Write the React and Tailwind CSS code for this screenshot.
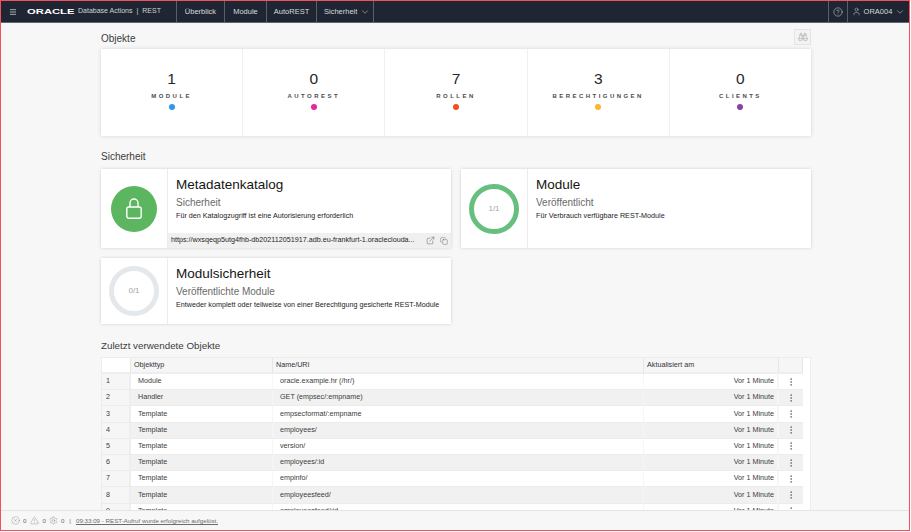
import {
  Binoculars,
  ChevronDown,
  CircleHelp,
  CircleX,
  Copy,
  EllipsisVertical,
  ExternalLink,
  Menu,
  Settings,
  TriangleAlert,
  User,
} from "lucide-react";

const counts = [
  { value: 1, label: "MODULE", dot: "bg-[#2f96ef]" },
  { value: 0, label: "AUTOREST", dot: "bg-[#e9259b]" },
  { value: 7, label: "ROLLEN", dot: "bg-[#f4511e]" },
  { value: 3, label: "BERECHTIGUNGEN", dot: "bg-[#fbb62b]" },
  { value: 0, label: "CLIENTS", dot: "bg-[#8344a8]" },
];

const rows = [
  ["Module", "oracle.example.hr (/hr/)"],
  ["Handler", "GET (empsec/:empname)"],
  ["Template", "empsecformat/:empname"],
  ["Template", "employees/"],
  ["Template", "version/"],
  ["Template", "employees/:id"],
  ["Template", "empinfo/"],
  ["Template", "employeesfeed/"],
  ["Template", "employeesfeed/:id"],
];

function NavItem({ children, className = "" }) {
  return (
    <div className={`h-full flex items-center border-l border-[#59606b] text-[7.5px] text-[#d8dadd] ${className}`}>
      {children}
    </div>
  );
}

function Ring({ label, color }) {
  return (
    <div className={`w-[50px] h-[50px] rounded-full border-[5px] ${color} flex items-center justify-center text-[8px] text-[#a3a6aa]`}>
      {label}
    </div>
  );
}

function Card({ icon, title, sub, text, className = "", footer }) {
  return (
    <div className={`w-[350px] bg-white shadow-[0_0_3px_rgba(0,0,0,0.16)] flex ${className}`}>
      <div className="w-[67px] shrink-0 border-r border-[#ececec] flex items-center justify-center">{icon}</div>
      <div className="flex-1 min-w-0 flex flex-col">
        <div className="flex-1 pl-2 pt-[7px]">
          <div className="text-[13.5px] leading-[18px] text-[#161513]">{title}</div>
          <div className="text-[10px] leading-[12px] mt-[3px] text-[#6a6a6a]">{sub}</div>
          <div className="text-[7.2px] leading-[10px] mt-[2px] text-[#1c1c1c]">{text}</div>
        </div>
        {footer}
      </div>
    </div>
  );
}

export default function App() {
  return (
    <div className="w-[911px] h-[532px] bg-white antialiased font-['Liberation_Sans',Arial,sans-serif]">
      <div className="w-[910px] h-[531px] border border-[#f0545a] flex flex-col overflow-hidden bg-[#f7f7f7]">
        <header className="h-[22px] shrink-0 bg-[#1f2532] flex items-center border-b border-[#5f6670]">
          <Menu size={8} strokeWidth={2.5} className="ml-2 text-[#c3c6ca]" />
          <span className="ml-[10px] w-[49px] text-[7.5px] font-bold text-white scale-x-[1.5] origin-left">ORACLE</span>
          <span className="ml-[2px] w-[98px] text-[7px] text-[#d0d3d6] whitespace-nowrap">
            Database Actions
            <span className="ml-[4px]">|</span>
            <span className="ml-[4px]">REST</span>
          </span>
          <NavItem className="w-[48px] justify-center">Überblick</NavItem>
          <NavItem className="w-[42px] justify-center">Module</NavItem>
          <NavItem className="w-[50px] justify-center">AutoREST</NavItem>
          <NavItem className="w-[58px] pl-[7px] gap-[3px] border-r">
            Sicherheit <ChevronDown size={10} strokeWidth={1.25} />
          </NavItem>
          <div className="flex-1" />
          <NavItem className="w-[19px] justify-center">
            <CircleHelp size={10} strokeWidth={1.25} />
          </NavItem>
          <NavItem className="w-[62px] justify-center gap-[3px]">
            <User size={9} strokeWidth={1.25} />
            ORA004
            <ChevronDown size={10} strokeWidth={1.25} />
          </NavItem>
        </header>

        <main className="flex-1 min-h-0 overflow-hidden pl-[100px] pr-[98px]">
          <div className="h-[26px] flex items-center justify-between">
            <h2 className="text-[10px] text-[#3d3c3a] mt-[4px]">Objekte</h2>
            <div className="w-[17px] h-[16px] mt-[1px] border border-[#e4e4e4] bg-[#f3f3f3] flex items-center justify-center text-[#8a8a8a]">
              <Binoculars size={10} strokeWidth={1} />
            </div>
          </div>

          <div className="h-[87px] bg-white shadow-[0_0_4px_rgba(0,0,0,0.14)] flex">
            {counts.map((c) => (
              <div key={c.label} className="flex-1 border-r border-[#f0f0f0] last:border-r-0 flex flex-col items-center pt-[21px]">
                <div className="text-[15.5px] leading-[18px] text-[#262626]">{c.value}</div>
                <div className="text-[6px] leading-[8px] mt-[4px] font-bold tracking-[2.45px] text-[#4c4c4c]">{c.label}</div>
                <div className={`w-[6px] h-[6px] rounded-full mt-[4px] ${c.dot}`} />
              </div>
            ))}
          </div>

          <h2 className="text-[10px] leading-[12px] mt-[15px] text-[#3d3c3a]">Sicherheit</h2>

          <div className="flex flex-wrap gap-x-[10px] gap-y-[10px] mt-[6px]">
            <Card
              className="h-[79px]"
              icon={
                <div className="w-[46px] h-[46px] rounded-full bg-[#5cb660] flex items-center justify-center">
                  <svg width="16" height="21" viewBox="0 0 16 21" fill="none" stroke="white" strokeWidth="1.4">
                    <rect x="0.8" y="9" width="14.4" height="11.3" rx="2" />
                    <path d="M4 9V5a4 4 0 0 1 8 0v4" />
                  </svg>
                </div>
              }
              title="Metadatenkatalog"
              sub="Sicherheit"
              text="Für den Katalogzugriff ist eine Autorisierung erforderlich"
              footer={
                <div className="h-[15px] bg-[#f0f0f0] flex items-center pl-[3px] pr-[3px] text-[#333]">
                  <span className="flex-1 min-w-0 whitespace-nowrap text-[7.2px] text-[#1f1f1f]">
                    https://wxsqeqp5utg4fhb-db202112051917.adb.eu-frankfurt-1.oracleclouda...
                  </span>
                  <ExternalLink size={9} strokeWidth={1} />
                  <Copy size={8} strokeWidth={1} className="ml-[5px]" />
                </div>
              }
            />
            <Card
              className="h-[79px]"
              icon={<Ring label="1/1" color="border-[#66bf7f]" />}
              title="Module"
              sub="Veröffentlicht"
              text="Für Verbrauch verfügbare REST-Module"
            />
            <Card
              className="h-[66px]"
              icon={<Ring label="0/1" color="border-[#e4e8eb]" />}
              title="Modulsicherheit"
              sub="Veröffentlichte Module"
              text="Entweder komplett oder teilweise von einer Berechtigung gesicherte REST-Module"
            />
          </div>

          <h2 className="text-[9.8px] leading-[12px] mt-[16px] text-[#3d3c3a]">Zuletzt verwendete Objekte</h2>

          <div className="mt-[5px] bg-white border border-[#ececec] pr-[7px]">
            <div className="h-[16px] flex bg-[#f6f6f7] border-b-2 border-[#eeeeee] text-[7.2px] text-[#333]">
              <div className="w-[29px] bg-white border-r border-[#e6e6e6]" />
              <div className="w-[142px] border-r border-[#e6e6e6] flex items-center pl-[3px]">Objekttyp</div>
              <div className="w-[371px] border-r border-[#e6e6e6] flex items-center pl-[3px]">Name/URI</div>
              <div className="w-[135px] border-r border-[#e6e6e6] flex items-center pl-[3px]">Aktualisiert am</div>
              <div className="flex-1 border-r border-[#e6e6e6]" />
            </div>
            {rows.map((r, i) => (
              <div
                key={i}
                className={`h-[16.2px] flex items-center text-[7.2px] text-[#3c3c3c] border-b border-[#ececec] ${i % 2 ? "bg-[#f1f1f2]" : "bg-white"}`}
              >
                <div className="w-[29px] h-full shrink-0 flex items-center pl-[4px] bg-[#f6f6f7] border-r-2 border-[#eeeeee]">{i + 1}</div>
                <div className="w-[142px] shrink-0 h-full flex items-center pl-[7px] border-r border-[#f6f6f6]">{r[0]}</div>
                <div className="w-[371px] shrink-0 h-full flex items-center pl-[7px] border-r border-[#f6f6f6]">{r[1]}</div>
                <div className="w-[135px] shrink-0 h-full flex items-center justify-end pr-[3px] border-r-2 border-[#f6f6f6]">Vor 1 Minute</div>
                <div className="flex-1 flex justify-center text-[#555]">
                  <EllipsisVertical size={10} strokeWidth={1.5} />
                </div>
              </div>
            ))}
          </div>
        </main>

        <footer className="h-[20px] shrink-0 bg-[#f7f7f7] border-t border-[#e4e4e4] flex items-center pl-[10px] text-[6.2px] text-[#6b6b6b]">
          <CircleX size={9} strokeWidth={0.9} />
          <span className="ml-[3px]">0</span>
          <TriangleAlert size={9} strokeWidth={0.9} className="ml-[4px]" />
          <span className="ml-[3px]">0</span>
          <Settings size={9} strokeWidth={0.9} className="ml-[3px]" />
          <span className="ml-[3px]">0</span>
          <span className="ml-[5px]">|</span>
          <span className="ml-[5px] underline">09:33:09 - REST-Aufruf wurde erfolgreich aufgelöst.</span>
        </footer>
      </div>
    </div>
  );
}
